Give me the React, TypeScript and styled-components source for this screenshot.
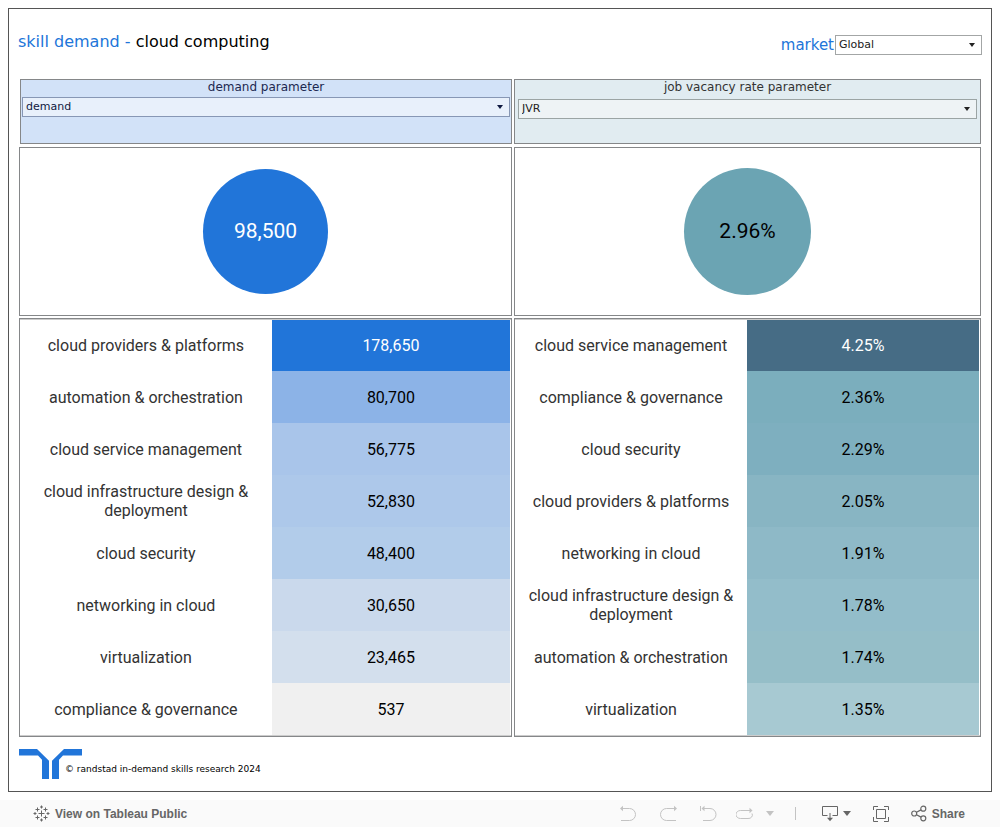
import React from "react";
import styled, { createGlobalStyle } from "styled-components";

const BLUE = "#2175d9";
const LINE = "#858789";

const GlobalStyle = createGlobalStyle`
  *, *::before, *::after { box-sizing: border-box; }
  body {
    margin: 0;
    background: #fff;
    font-family: "DejaVu Sans", sans-serif;
  }
`;

const Page = styled.div`
  display: flex;
  flex-direction: column;
  min-height: 100vh;
`;

const Dashboard = styled.main`
  flex: 1;
  margin: 8px;
  padding: 0 10px 12px;
  border: 1px solid #555;
`;

const Header = styled.header`
  display: flex;
  justify-content: space-between;
  height: 70px;
  padding-top: 23px;
  margin: 0 -1px;
`;

const Title = styled.h1`
  margin: 0;
  font-size: 16px;
  line-height: 20px;
  font-weight: 400;
  color: #000;
`;

const Accent = styled.span`
  color: ${BLUE};
`;

const Market = styled.div`
  display: flex;
  align-items: center;
  gap: 1px;
  height: 20px;
  margin-top: 3px;
`;

const MarketLabel = styled.label`
  font-size: 15px;
  line-height: 20px;
  color: ${BLUE};
`;

const Picker = styled.div<{ $width?: string; $ink: string }>`
  position: relative;
  width: ${(p) => p.$width ?? "auto"};
  color: ${(p) => p.$ink};

  &::after {
    content: "";
    position: absolute;
    right: 7px;
    top: 8px;
    border: solid transparent;
    border-width: 4px 3px 0;
    border-top-color: currentColor;
    pointer-events: none;
  }
`;

const Select = styled.select<{ $bg: string; $line: string }>`
  appearance: none;
  display: block;
  width: 100%;
  height: 20px;
  margin: 0;
  padding: 0 20px 2px 3px;
  border: 1px solid ${(p) => p.$line};
  border-radius: 0;
  background: ${(p) => p.$bg};
  color: inherit;
  font-family: inherit;
  font-size: 11px;
`;

const Columns = styled.div`
  display: grid;
  grid-template-columns: 493fr 467fr;
  gap: 2px;
`;

const Column = styled.section`
  display: flex;
  flex-direction: column;
`;

const ParameterPanel = styled.div<{ $bg: string; $inset: string; $indent?: string }>`
  height: 65px;
  margin: 0 0 3px ${(p) => p.$indent ?? "0"};
  padding: 0 ${(p) => p.$inset};
  border: 1px solid ${LINE};
  background: ${(p) => p.$bg};
`;

const ParameterLabel = styled.label<{ $height: string; $ink: string }>`
  display: block;
  font-size: 12px;
  line-height: 15px;
  height: ${(p) => p.$height};
  text-align: center;
  color: ${(p) => p.$ink};
`;

const TotalPanel = styled.div`
  display: flex;
  align-items: center;
  justify-content: center;
  height: 169px;
  margin-bottom: 2px;
  border: 1px solid ${LINE};
`;

const Circle = styled.div<{ $size: string; $bg: string; $ink: string }>`
  display: flex;
  align-items: center;
  justify-content: center;
  width: ${(p) => p.$size};
  height: ${(p) => p.$size};
  border-radius: 50%;
  background: ${(p) => p.$bg};
  color: ${(p) => p.$ink};
  font: 21px/25px Roboto, sans-serif;
`;

const RankPanel = styled.div`
  padding: 1px 1px 1px 0;
  border: 1px solid ${LINE};
  box-shadow: inset 0 1px #ccc, inset 0 -1px #ccc;
`;

const RankTable = styled.table`
  width: 100%;
  table-layout: fixed;
  border-collapse: collapse;
  font: 16px/19px Roboto, sans-serif;
  text-align: center;
`;

const RankRow = styled.tr`
  height: 52px;

  &:first-child {
    height: 51px;
  }
`;

const Skill = styled.th<{ $width: string }>`
  width: ${(p) => p.$width};
  padding: 0 8px;
  font-weight: 400;
  color: #333;
`;

const Value = styled.td<{ $bg: string; $ink: string }>`
  padding: 0;
  background: ${(p) => p.$bg};
  color: ${(p) => p.$ink};
`;

const Credits = styled.footer`
  display: flex;
  align-items: center;
  margin-top: 12px;
`;

/* The line of credit tucks in under the logo's right arm. */
const Copyright = styled.small`
  margin-left: -17px;
  padding-top: 9px;
  font-size: 9px;
  line-height: 12px;
  color: #000;
`;

const Toolbar = styled.nav`
  display: flex;
  align-items: center;
  justify-content: space-between;
  height: 27px;
  padding: 0 35px 0 33px;
  background: #fafafa;
`;

const ToolbarLink = styled.a`
  display: flex;
  align-items: center;
  gap: 5px;
  font: bold 12px/16px "Liberation Sans", Arial, sans-serif;
  color: #666;
  text-decoration: none;
`;

const Tools = styled.div`
  display: flex;
  align-items: center;
`;

const ToolButton = styled.button<{ $gap?: string; $muted?: boolean }>`
  display: flex;
  align-items: center;
  gap: 5px;
  margin: 0 0 0 ${(p) => p.$gap ?? "0"};
  padding: 0;
  border: 0;
  background: none;
  color: ${(p) => (p.$muted ? "#c3c3c3" : "#666")};
  font: bold 12px/16px "Liberation Sans", Arial, sans-serif;
`;

const Divider = styled.span`
  width: 1px;
  height: 13px;
  margin-left: 21px;
  background: #c3c3c3;
`;

type Row = [skill: string, value: string, bg: string, ink?: string];

const demandRows: Row[] = [
  ["cloud providers & platforms", "178,650", "#2175d9", "#fff"],
  ["automation & orchestration", "80,700", "#8cb3e7"],
  ["cloud service management", "56,775", "#a9c5ea"],
  ["cloud infrastructure design & deployment", "52,830", "#adc8ea"],
  ["cloud security", "48,400", "#b2ccea"],
  ["networking in cloud", "30,650", "#cad9ec"],
  ["virtualization", "23,465", "#d3dfed"],
  ["compliance & governance", "537", "#f0f0f0"],
];

const vacancyRows: Row[] = [
  ["cloud service management", "4.25%", "#466c85", "#fff"],
  ["compliance & governance", "2.36%", "#7baebd"],
  ["cloud security", "2.29%", "#7eafbf"],
  ["cloud providers & platforms", "2.05%", "#88b5c3"],
  ["networking in cloud", "1.91%", "#8eb9c7"],
  ["cloud infrastructure design & deployment", "1.78%", "#93bdca"],
  ["automation & orchestration", "1.74%", "#95bec8"],
  ["virtualization", "1.35%", "#a7c9d2"],
];

const Ranking = ({ rows, skillWidth }: { rows: Row[]; skillWidth: string }) => (
  <RankPanel>
    <RankTable>
      <tbody>
        {rows.map(([skill, value, bg, ink]) => (
          <RankRow key={skill}>
            <Skill scope="row" $width={skillWidth}>{skill}</Skill>
            <Value $bg={bg} $ink={ink ?? "#000"}>{value}</Value>
          </RankRow>
        ))}
      </tbody>
    </RankTable>
  </RankPanel>
);

const RandstadLogo = () => (
  <svg width="63" height="30" viewBox="0 0 63 30" fill={BLUE} aria-hidden="true">
    <path d="M0 0H18L30 11.700V30H23V10.800L19 6.600H0Z" />
    <path d="M63 0H45L33 11.700V30H40V10.800L44 6.600H63Z" />
  </svg>
);

const TableauMark = () => (
  <svg width="17" height="17" viewBox="0 0 17 17" fill="none" stroke="#666" aria-hidden="true">
    <path d="M8.500 5.500v6M5.500 8.500h6" />
    <path d="M8.500 .5v3M7 2h3M8.500 13.500v3M7 15h3M.5 8.500h3M2 7v3M13.500 8.500h3M15 7v3" />
    <path d="M4.500 2.500v4M2.500 4.500h4M12.500 2.500v4M10.500 4.500h4M4.500 10.500v4M2.500 12.500h4M12.500 10.500v4M10.500 12.500h4" />
  </svg>
);

const UndoIcon = () => (
  <svg width="17" height="17" viewBox="0 0 17 17" fill="none" stroke="currentColor" aria-hidden="true">
    <path d="M1.500 3.500H9.500a6 6 0 0 1 0 12H1" />
    <path d="M0 3.500L3 .8V6.200Z" fill="currentColor" stroke="none" />
  </svg>
);

const RedoIcon = () => (
  <svg width="17" height="17" viewBox="0 0 17 17" fill="none" stroke="currentColor" aria-hidden="true">
    <path d="M15 3.500H6.500a6 6 0 0 0 0 12H16" />
    <path d="M17 3.500L14 .8V6.200Z" fill="currentColor" stroke="none" />
  </svg>
);

const RevertIcon = () => (
  <svg width="17" height="17" viewBox="0 0 17 17" fill="none" stroke="currentColor" aria-hidden="true">
    <path d="M.5 1V6M3 3.500H10a6 6 0 0 1 0 12H3" />
    <path d="M1.500 3.500L4.500 .8V6.200Z" fill="currentColor" stroke="none" />
  </svg>
);

const RefreshIcon = () => (
  <svg width="17" height="13" viewBox="0 0 17 13" fill="none" stroke="currentColor" aria-hidden="true">
    <path d="M14 3.500H4.500a4 3.500 0 0 0 0 8H12a4 3.500 0 0 0 4-5" />
    <path d="M16.500 3.500L13.500 .8V6.200Z" fill="currentColor" stroke="none" />
  </svg>
);

const CaretIcon = () => (
  <svg width="8" height="5" viewBox="0 0 8 5" fill="currentColor" aria-hidden="true">
    <path d="M0 0H8L4 5Z" />
  </svg>
);

const DownloadIcon = () => (
  <svg width="16" height="17" viewBox="0 0 16 17" fill="none" stroke="currentColor" aria-hidden="true">
    <path d="M5.500 10.500H.5V1.500H15.500V10.500H10.500M8 8V14" />
    <path d="M5 12.800H11L8 16.200Z" fill="currentColor" stroke="none" />
  </svg>
);

const FullscreenIcon = () => (
  <svg width="16" height="17" viewBox="0 0 16 17" fill="none" stroke="currentColor" aria-hidden="true">
    <path d="M.5 5V1.500H5M11 1.500H15.500V5M15.500 12V16.500H11M5 16.500H.5V12M3.500 4.500H12.500V13.500H3.500Z" />
  </svg>
);

const ShareIcon = () => (
  <svg width="16" height="17" viewBox="0 0 16 17" fill="none" stroke="currentColor" strokeWidth="1.200" aria-hidden="true">
    <circle cx="3.200" cy="8.500" r="2.500" />
    <circle cx="12.300" cy="3.700" r="2.500" />
    <circle cx="12.300" cy="13.300" r="2.500" />
    <path d="M5.500 7.300L10 4.900M5.500 9.700L10 12.100" />
  </svg>
);

export default function App() {
  return (
    <Page>
      <GlobalStyle />
      <Dashboard>
        <Header>
          <Title>
            <Accent>skill demand - </Accent>cloud computing
          </Title>
          <Market>
            <MarketLabel htmlFor="market">market</MarketLabel>
            <Picker $width="147px" $ink="#222">
              <Select id="market" $bg="#fff" $line="#a3a6a6">
                <option>Global</option>
              </Select>
            </Picker>
          </Market>
        </Header>

        <Columns>
          <Column>
            <ParameterPanel $bg="#d2e2f8" $inset="1px" $indent="1px">
              <ParameterLabel htmlFor="demand" $height="17px" $ink="#1c2850">
                demand parameter
              </ParameterLabel>
              <Picker $ink="#0f1941">
                <Select id="demand" $bg="#e8f0fb" $line="#8797b5">
                  <option>demand</option>
                </Select>
              </Picker>
            </ParameterPanel>
            <TotalPanel>
              <Circle $size="125px" $bg={BLUE} $ink="#fff">98,500</Circle>
            </TotalPanel>
            <Ranking rows={demandRows} skillWidth="51.4%" />
          </Column>

          <Column>
            <ParameterPanel $bg="#e1ecf1" $inset="3px">
              <ParameterLabel htmlFor="vacancy" $height="19px" $ink="#333">
                job vacancy rate parameter
              </ParameterLabel>
              <Picker $ink="#222">
                <Select id="vacancy" $bg="#eef3f5" $line="#9ba4a4">
                  <option>JVR</option>
                </Select>
              </Picker>
            </ParameterPanel>
            <TotalPanel>
              <Circle $size="127px" $bg="#6ba4b3" $ink="#000">2.96%</Circle>
            </TotalPanel>
            <Ranking rows={vacancyRows} skillWidth="50%" />
          </Column>
        </Columns>

        <Credits>
          <RandstadLogo />
          <Copyright>© randstad in-demand skills research 2024</Copyright>
        </Credits>
      </Dashboard>

      <Toolbar>
        <ToolbarLink href="#tableau-public">
          <TableauMark />
          View on Tableau Public
        </ToolbarLink>
        <Tools>
          <ToolButton $muted aria-label="Undo"><UndoIcon /></ToolButton>
          <ToolButton $muted $gap="23px" aria-label="Redo"><RedoIcon /></ToolButton>
          <ToolButton $muted $gap="23px" aria-label="Revert"><RevertIcon /></ToolButton>
          <ToolButton $muted $gap="19px" aria-label="Refresh"><RefreshIcon /></ToolButton>
          <ToolButton $muted $gap="13px" aria-label="Refresh options"><CaretIcon /></ToolButton>
          <Divider />
          <ToolButton $gap="26px" aria-label="Download"><DownloadIcon /><CaretIcon /></ToolButton>
          <ToolButton $gap="22px" aria-label="Full screen"><FullscreenIcon /></ToolButton>
          <ToolButton $gap="22px"><ShareIcon />Share</ToolButton>
        </Tools>
      </Toolbar>
    </Page>
  );
}
